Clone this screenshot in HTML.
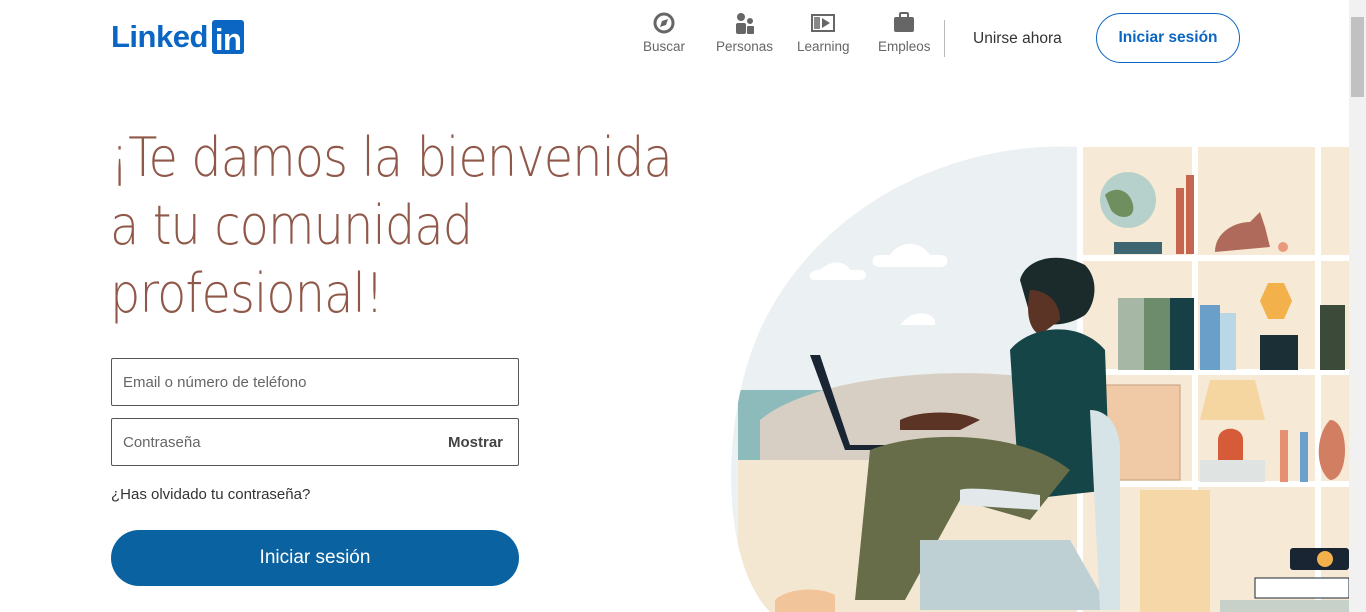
<!DOCTYPE html>
<html><head><meta charset="utf-8"><style>
*{margin:0;padding:0;box-sizing:border-box}
body{width:1366px;height:612px;overflow:hidden;background:#fff;font-family:"Liberation Sans",sans-serif;position:relative}
.sb{position:absolute;right:0;top:0;width:17px;height:612px;background:#f1f1f1}
.sb .th{position:absolute;left:2px;top:17px;width:13px;height:80px;background:#c1c1c1}
.logo{position:absolute;left:111px;top:20px;font-weight:bold;font-size:31px;color:#0a66c2;letter-spacing:-0.5px;line-height:34px}
.logo span{display:inline-block;background:#0a66c2;color:#fff;border-radius:3px;padding:0 3px;margin-left:4px;height:34px;line-height:40px;vertical-align:top}
.nav{position:absolute;top:12px;font-size:13.5px;color:#666;text-align:center}
.nav svg{display:block;margin:0 auto 5px}
.div{position:absolute;left:944px;top:20px;width:1px;height:37px;background:#bbb}
.join{position:absolute;left:973px;top:30px;font-size:15.5px;color:#333}
.sign{position:absolute;left:1096px;top:13px;width:144px;height:50px;border:1px solid #0a66c2;border-radius:25px;color:#0a66c2;font-size:15.5px;text-align:center;line-height:48px;font-weight:bold}
h1{position:absolute;left:110px;top:124px;font-size:54px;line-height:68px;color:#8f5849;font-family:"DejaVu Sans","Liberation Sans",sans-serif;font-weight:200;letter-spacing:-1px;transform:scaleX(0.885);transform-origin:0 0;white-space:nowrap}
.in{position:absolute;left:111px;width:408px;height:48px;border:1px solid #555;border-radius:2px;font-size:15px;color:#666;padding:15px 11px}
.show{position:absolute;right:15px;top:15px;color:#444;font-weight:bold;font-size:15px}
.fg{position:absolute;left:111px;top:486px;font-size:15px;color:#333}
.btn{position:absolute;left:111px;top:530px;width:408px;height:56px;border-radius:28px;background:#0b62a0;color:#fff;font-size:19px;text-align:center;line-height:56px}
</style></head><body>
<div class="logo">Linked<span>in</span></div>
<div class="nav" style="left:643px"><svg width="22" height="22" viewBox="0 0 22 22"><circle cx="11" cy="11" r="9" fill="none" stroke="#666" stroke-width="3"/><path d="M15 7l-2 6-6 2 2-6z" fill="#666"/></svg>Buscar</div>
<div class="nav" style="left:716px"><svg width="22" height="22" viewBox="0 0 22 22"><circle cx="7" cy="5" r="4" fill="#666"/><circle cx="16" cy="9" r="3" fill="#666"/><rect x="2" y="11" width="10" height="11" rx="2" fill="#666"/><rect x="13" y="14" width="7" height="8" rx="1" fill="#666"/></svg>Personas</div>
<div class="nav" style="left:797px"><svg width="26" height="22" viewBox="0 0 26 22"><rect x="2" y="3" width="22" height="16" fill="none" stroke="#666" stroke-width="2"/><rect x="4" y="5" width="6" height="12" fill="#888"/><path d="M12 6l8 5-8 5z" fill="#666"/></svg>Learning</div>
<div class="nav" style="left:878px"><svg width="22" height="22" viewBox="0 0 22 22"><rect x="7" y="1" width="8" height="5" rx="1" fill="none" stroke="#666" stroke-width="2"/><rect x="1" y="5" width="20" height="15" rx="2" fill="#666"/></svg>Empleos</div>
<div class="div"></div>
<div class="join">Unirse ahora</div>
<div class="sign">Iniciar sesión</div>
<h1>¡Te damos la bienvenida<br>a tu comunidad<br>profesional!</h1>
<div class="in" style="top:358px">Email o número de teléfono</div>
<div class="in" style="top:418px">Contraseña<span class="show">Mostrar</span></div>
<div class="fg">¿Has olvidado tu contraseña?</div>
<div class="btn">Iniciar sesión</div>
<svg style="position:absolute;left:730px;top:140px" width="620" height="472" viewBox="730 140 620 472">
<defs><clipPath id="c"><path d="M1080 147 H1349 V612 H770 C720 560 720 420 760 330 C820 200 960 140 1080 147Z"/></clipPath></defs>
<g clip-path="url(#c)">
<rect x="730" y="140" width="620" height="472" fill="#ebf0f2"/>
<rect x="738" y="390" width="340" height="100" fill="#8dbbbb"/>
<path d="M760 420 C820 370 1000 360 1090 390 V470 H760Z" fill="#d7cfc3"/>
<rect x="738" y="460" width="360" height="152" fill="#f4e7d1"/>
<rect x="1080" y="147" width="270" height="465" fill="#f6e9d6"/>
<path d="M1080 147V612M1195 147V490M1318 147V612M1080 258H1349M1080 372H1349M1080 484H1349" stroke="#fff" stroke-width="6"/>
<circle cx="1128" cy="200" r="28" fill="#b6d1cb"/><path d="M1105 195c10-10 25-5 28 10s-15 15-22 5z" fill="#6f8f5e"/>
<rect x="1114" y="242" width="48" height="12" fill="#3d6670"/>
<rect x="1176" y="188" width="8" height="66" fill="#c66650"/><rect x="1186" y="175" width="8" height="79" fill="#c66650"/>
<path d="M1215 252c0-20 20-30 35-30l10-10 5 15 5 20z" fill="#b06a5b"/><circle cx="1283" cy="247" r="5" fill="#e99a7d"/>
<rect x="1118" y="298" width="26" height="72" fill="#a6b7a6"/><rect x="1144" y="298" width="26" height="72" fill="#6c8c6b"/><rect x="1170" y="298" width="24" height="72" fill="#164046"/>
<rect x="1200" y="305" width="20" height="65" fill="#6a9fca"/><rect x="1220" y="313" width="16" height="57" fill="#b9d7e5"/>
<path d="M1268 283h16l8 18-8 18h-16l-8-18z" fill="#f2b14b"/><rect x="1260" y="335" width="38" height="35" fill="#1a2f36"/>
<rect x="1320" y="305" width="25" height="65" fill="#3b4a39"/>
<rect x="1100" y="385" width="80" height="95" fill="#f0c9a6" stroke="#c9a07f"/>
<path d="M1210 380h45l10 40h-65z" fill="#f5d6a0"/><path d="M1218 440c0-15 25-15 25 0v20h-25z" fill="#d65c39"/>
<rect x="1200" y="460" width="65" height="22" fill="#dfe3e2"/>
<rect x="1280" y="430" width="8" height="52" fill="#e49073"/><rect x="1300" y="432" width="8" height="50" fill="#6aa0cb"/>
<path d="M1330 420c20 0 20 60 0 60c-15-10-15-45 0-60z" fill="#d17e63"/>
<rect x="1140" y="490" width="70" height="122" fill="#f6d8a8"/>
</g>
<path d="M890 255c10-15 30-15 40 0h10c10 0 10 12 0 12h-60c-10 0-10-12 0-12z" fill="#fff"/>
<path d="M820 270c10-10 25-10 30 0h10c8 0 8 10 0 10h-45c-8 0-8-10 5-10z" fill="#fff"/>
<path d="M905 320c10-10 25-8 30 0v5h-35z" fill="#fff"/>
<path d="M1020 280c5-20 35-30 65-15c15 15 10 40 0 50c-15 10-40 15-55 0z" fill="#1b2a2a"/>
<path d="M1030 290c15 0 30 10 30 30l-20 15c-10-5-15-20-10-45z" fill="#5b3426"/>
<path d="M1010 350c20-25 70-30 95 0l5 140-90 10z" fill="#164547"/>
<path d="M820 355l30 90h90l-15 5h-80l-35-95z" fill="#1a2533"/>
<path d="M900 420c20-10 60-10 80 0l-20 10h-60z" fill="#5b3426"/>
<path d="M870 450c50-20 150-20 200 20l-40 50-70-20-55 100h-50z" fill="#666d48"/>
<path d="M960 490c10-5 80 5 80 5v15l-80-5z" fill="#e3e8ea"/>
<path d="M920 540h150l40 70h-190z" fill="#bfd0d5"/>
<path d="M1090 410c20 0 30 20 30 40v160h-20z" fill="#d7e4e7"/>
<path d="M775 600c10-10 40-15 60-5v17h-60z" fill="#f2c49a"/>
<rect x="1290" y="548" width="59" height="22" rx="3" fill="#1a2533"/><circle cx="1325" cy="559" r="8" fill="#f2b14b"/>
<rect x="1255" y="578" width="94" height="20" fill="#fff" stroke="#1a2533"/>
<rect x="1220" y="600" width="129" height="12" fill="#c7d1c9"/>
</svg>
<div class="sb"><div class="th"></div></div>
</body></html>
